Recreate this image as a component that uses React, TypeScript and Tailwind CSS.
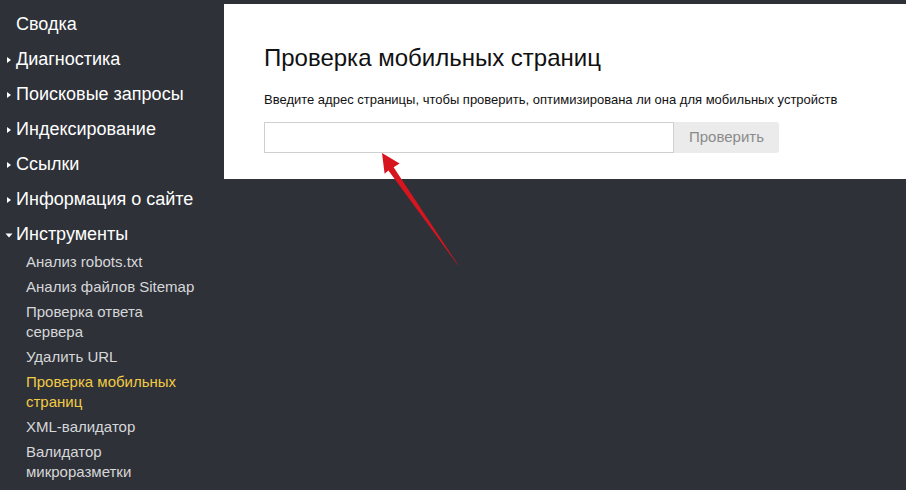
import React from "react";

const topItems: { label: string; arrow: "none" | "right" | "down" }[] = [
    { label: "Сводка", arrow: "none" },
    { label: "Диагностика", arrow: "right" },
    { label: "Поисковые запросы", arrow: "right" },
    { label: "Индексирование", arrow: "right" },
    { label: "Ссылки", arrow: "right" },
    { label: "Информация о сайте", arrow: "right" },
    { label: "Инструменты", arrow: "down" },
];

const toolItems: { label: string; active?: boolean }[] = [
    { label: "Анализ robots.txt" },
    { label: "Анализ файлов Sitemap" },
    { label: "Проверка ответа сервера" },
    { label: "Удалить URL" },
    { label: "Проверка мобильных страниц", active: true },
    { label: "XML-валидатор" },
    { label: "Валидатор микроразметки" },
];

const Caret: React.FC<{ dir: "right" | "down" }> = ({ dir }) => (
    <svg width="8" height="8" viewBox="0 0 8 8" className="shrink-0">
        {dir === "right" ? (
            <polygon points="2,1 6,4 2,7" fill="#ffffff" />
        ) : (
            <polygon points="0.5,2.5 7.5,2.5 4,6.5" fill="#ffffff" />
        )}
    </svg>
);

const Sidebar: React.FC = () => (
    <nav className="w-[224px] shrink-0 pt-[7px]">
        {topItems.map((item) => (
            <div
                key={item.label}
                className="flex items-center h-[35px] text-[18px] text-white"
            >
                <span className="w-[16px] flex justify-center pl-[1px]">
                    {item.arrow !== "none" && <Caret dir={item.arrow} />}
                </span>
                <span>{item.label}</span>
            </div>
        ))}
        <ul className="flex flex-col gap-[5px] pl-[26px] pr-[26px] text-[15px] leading-[20px]">
            {toolItems.map((item) => (
                <li
                    key={item.label}
                    className={item.active ? "text-[#f2cb45]" : "text-[#d6d7d9]"}
                >
                    {item.label}
                </li>
            ))}
        </ul>
    </nav>
);

const Arrow: React.FC = () => (
    <svg
        className="absolute left-0 top-0 pointer-events-none"
        width="906"
        height="490"
        viewBox="0 0 906 490"
    >
        <polygon
            points="458.4,265.3 457.6,264.7 388.4,170.5 384.6,173.8 382,153 399.6,163.4 393.6,167.2"
            fill="#d7151f"
        />
    </svg>
);

export default function App() {
    return (
        <div
            className="relative w-[906px] h-[490px] overflow-hidden bg-[#2e3138] flex"
            style={{ fontFamily: '"Liberation Sans", Arial, sans-serif' }}
        >
            <Sidebar />
            <main className="flex-1 pt-[4px]">
                <section className="bg-white h-[175px] pl-[40px] pt-[39px]">
                    <h1 className="text-[24px] leading-[30px] text-[#111]">
                        Проверка мобильных страниц
                    </h1>
                    <p className="mt-[19px] text-[13px] leading-[16px] text-[#111]">
                        Введите адрес страницы, чтобы проверить, оптимизирована ли она для мобильных устройств
                    </p>
                    <div className="mt-[14px] flex h-[31px]">
                        <input
                            type="text"
                            className="w-[410px] h-full border border-[#cfcfcf] outline-none px-2 text-[14px]"
                        />
                        <button className="w-[105px] h-full bg-[#ebebeb] rounded-r-[3px] text-[15px] text-[#8a8a8a]">
                            Проверить
                        </button>
                    </div>
                </section>
            </main>
            <Arrow />
        </div>
    );
}
